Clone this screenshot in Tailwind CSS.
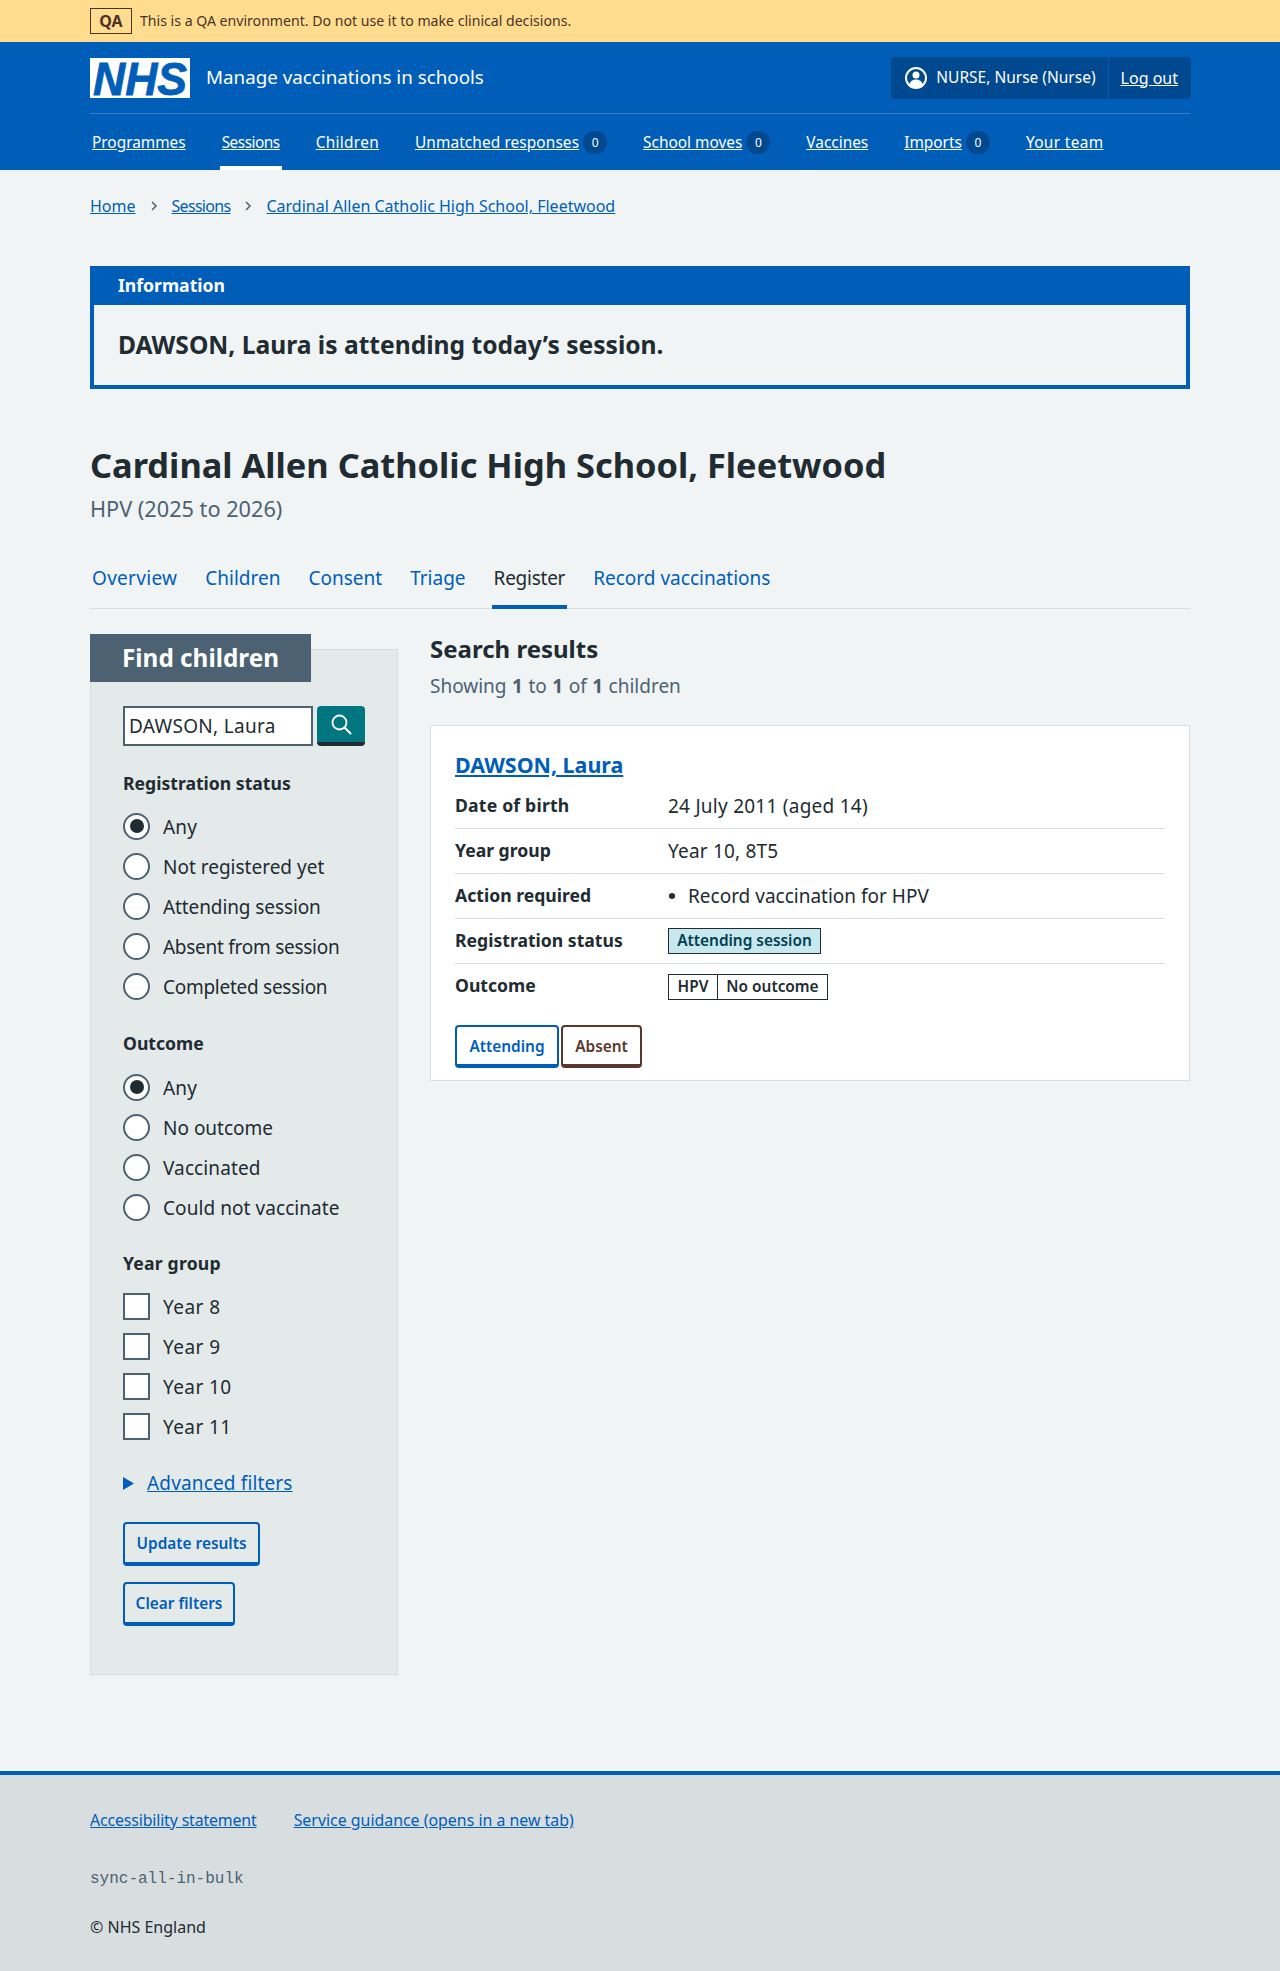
<!DOCTYPE html>
<html lang="en">
<head>
<meta charset="UTF-8">
<title>Register – Manage vaccinations in schools</title>
<script src="https://cdn.jsdelivr.net/npm/@tailwindcss/browser@4"></script>
</head>
<body class="bg-[#f0f4f5] text-[#212b32] font-['Noto_Sans',sans-serif] text-[19px]">

<!-- environment banner -->
<div class="h-[42px] bg-[#ffdc8e] text-[#4a3328]">
  <div class="w-[1100px] mx-auto flex items-center h-[42px]">
    <span class="border border-[#4a3328] w-[42px] h-[26px] flex items-center justify-center font-bold text-[16px] mr-2">QA</span>
    <span class="text-[14.1px]">This is a QA environment. Do not use it to make clinical decisions.</span>
  </div>
</div>

<header class="bg-[#005eb8] h-[128px] text-white">
  <div class="w-[1100px] mx-auto">
    <div class="h-[72px] flex items-center border-b border-white/20">
      <svg class="w-[100px] h-[40px] mr-4 overflow-visible" viewBox="0 0 100 40"><rect width="100" height="40" fill="#fff"/><text x="3" y="37" textLength="94" lengthAdjust="spacingAndGlyphs" font-family="Liberation Sans" font-weight="700" font-style="italic" font-size="47" fill="#005eb8" stroke="#005eb8" stroke-width="0.8">NHS</text></svg>
      <span class="text-[18.8px]">Manage vaccinations in schools</span>
      <div class="ml-auto flex h-[42px] bg-[#00488f] rounded items-center mr-[-1px]">
        <span class="flex items-center gap-[9px] pl-[14px] pr-[12px] text-[15.5px]">
          <svg class="w-[22px] h-[26px]" viewBox="0 0 22 26"><circle cx="11" cy="13" r="10" fill="none" stroke="#fff" stroke-width="2"/><circle cx="11" cy="10" r="3.5" fill="#fff"/><path d="M4 20c1-4 4-5.500 7-5.500s6 1.500 7 5.500a10 10 0 0 1-14 0z" fill="#fff"/></svg>
          NURSE, Nurse (Nurse)
        </span>
        <a class="border-l border-[#005eb8] h-full flex items-center pl-3 pr-[13px] underline text-[16px]">Log out</a>
      </div>
    </div>
    <nav class="flex h-[56px] pt-[2px] items-center text-[15.4px] gap-[36px] pl-[2px]">
      <a class="underline">Programmes</a>
      <a class="underline relative h-full flex items-center tracking-[-0.5px]">Sessions<span class="absolute -left-[2px] -right-[2px] bottom-0 h-1 bg-white"></span></a>
      <a class="underline tracking-[0.3px]">Children</a>
      <span class="flex items-center gap-1"><a class="underline tracking-[0.1px]">Unmatched responses</a><span class="w-6 h-[23px] rounded-full bg-[#00488f] text-[12px] flex items-center justify-center">0</span></span>
      <span class="flex items-center gap-1"><a class="underline">School moves</a><span class="w-6 h-[23px] rounded-full bg-[#00488f] text-[12px] flex items-center justify-center">0</span></span>
      <a class="underline">Vaccines</a>
      <span class="flex items-center gap-1"><a class="underline">Imports</a><span class="w-6 h-[23px] rounded-full bg-[#00488f] text-[12px] flex items-center justify-center">0</span></span>
      <a class="underline tracking-[0.35px]">Your team</a>
    </nav>
  </div>
</header>

<main class="w-[1100px] mx-auto pb-[96px]">
  <div class="h-[72px] text-[16px] text-[#005eb8] flex items-center">
    <a class="underline">Home</a>
    <svg class="w-[36px] h-3" viewBox="0 0 36 12"><path d="M16 2l4 4-4 4" fill="none" stroke="#4c6272" stroke-width="1.500"/></svg>
    <a class="underline tracking-[-0.7px]">Sessions</a>
    <svg class="w-[36px] h-3" viewBox="0 0 36 12"><path d="M16 2l4 4-4 4" fill="none" stroke="#4c6272" stroke-width="1.500"/></svg>
    <a class="underline">Cardinal Allen Catholic High School, Fleetwood</a>
  </div>

  <div class="mt-[24px] border-[4px] border-t-0 border-[#005eb8] h-[123px]">
    <div class="bg-[#005eb8] text-white font-bold text-[17.6px] h-[39px] flex items-center -mx-[4px] pl-[28px]">Information</div>
    <p class="font-bold text-[24.6px] pl-6 h-[80px] flex items-center">DAWSON, Laura is attending today’s session.</p>
  </div>

  <h1 class="mt-[54px] text-[34.4px] font-bold h-[44px] flex items-center">Cardinal Allen Catholic High School, Fleetwood</h1>
  <p class="text-[#4c6272] text-[21.7px] mt-[7px] h-[30px] flex items-center">HPV (2025 to 2026)</p>

  <div class="mt-[24px] flex gap-7 border-b border-[#d8dde0] h-[61px] pl-[2px] text-[#005eb8]">
    <a class="flex items-center h-[60px] tracking-[0.3px]">Overview</a>
    <a class="flex items-center h-[60px]">Children</a>
    <a class="flex items-center h-[60px]">Consent</a>
    <a class="flex items-center h-[60px]">Triage</a>
    <a class="flex items-center h-[61px] text-[#212b32] relative tracking-[-0.25px]">Register<span class="absolute -left-[2px] -right-[2px] bottom-0 h-1 bg-[#005eb8]"></span></a>
    <a class="flex items-center h-[60px]">Record vaccinations</a>
  </div>

  <div class="flex gap-8 mt-[25px] items-start">
    <aside class="w-[308px] h-[1026px] mt-[15px] bg-[#e4eaea] border border-[#d8dde0]">
      <div class="-mt-[16px] -ml-px w-[221px] h-[48px] bg-[#4c6272] text-white font-bold text-[24.3px] flex items-center pl-[32px]">Find children</div>
      <div class="pl-8">
        <div class="flex gap-1 mt-[24px]">
          <div class="w-[190px] h-[40px] border-2 border-[#4c6272] bg-white pl-1 flex items-center tracking-[0.3px]">DAWSON, Laura</div>
          <div class="w-[48px] h-[40px] bg-[#007780] rounded border-b-4 border-[#212b32] flex items-center justify-center">
            <svg class="w-[22px] h-[22px]" viewBox="0 0 22 22"><circle cx="9.500" cy="9.500" r="7" fill="none" stroke="#fff" stroke-width="1.800"/><path d="M14.500 14.500l6 6" stroke="#fff" stroke-width="2" stroke-linecap="round"/></svg>
          </div>
        </div>

        <div class="mt-[23px] h-[28px] flex items-center font-bold text-[17.6px]">Registration status</div>
        <div class="mt-[9px]">
          <label class="h-[40px] flex items-center gap-[13px]"><span class="w-[27px] h-[27px] rounded-full border-2 border-[#4c6272] bg-white flex items-center justify-center"><span class="w-[14px] h-[14px] rounded-full bg-[#212b32]"></span></span><span class="mt-[2px] tracking-[0.2px]">Any</span></label>
          <label class="h-[40px] flex items-center gap-[13px]"><span class="w-[27px] h-[27px] rounded-full border-2 border-[#4c6272] bg-white"></span><span class="mt-[2px]">Not registered yet</span></label>
          <label class="h-[40px] flex items-center gap-[13px]"><span class="w-[27px] h-[27px] rounded-full border-2 border-[#4c6272] bg-white"></span><span class="mt-[2px] tracking-[-0.1px]">Attending session</span></label>
          <label class="h-[40px] flex items-center gap-[13px]"><span class="w-[27px] h-[27px] rounded-full border-2 border-[#4c6272] bg-white"></span><span class="mt-[2px] tracking-[-0.27px]">Absent from session</span></label>
          <label class="h-[40px] flex items-center gap-[13px]"><span class="w-[27px] h-[27px] rounded-full border-2 border-[#4c6272] bg-white"></span><span class="mt-[2px] tracking-[-0.27px]">Completed session</span></label>
        </div>

        <div class="mt-[23px] h-[28px] flex items-center font-bold text-[17.6px]">Outcome</div>
        <div class="mt-[10px]">
          <label class="h-[40px] flex items-center gap-[13px]"><span class="w-[27px] h-[27px] rounded-full border-2 border-[#4c6272] bg-white flex items-center justify-center"><span class="w-[14px] h-[14px] rounded-full bg-[#212b32]"></span></span><span class="mt-[2px] tracking-[0.2px]">Any</span></label>
          <label class="h-[40px] flex items-center gap-[13px]"><span class="w-[27px] h-[27px] rounded-full border-2 border-[#4c6272] bg-white"></span><span class="mt-[2px]">No outcome</span></label>
          <label class="h-[40px] flex items-center gap-[13px]"><span class="w-[27px] h-[27px] rounded-full border-2 border-[#4c6272] bg-white"></span><span class="mt-[2px] tracking-[0.1px]">Vaccinated</span></label>
          <label class="h-[40px] flex items-center gap-[13px]"><span class="w-[27px] h-[27px] rounded-full border-2 border-[#4c6272] bg-white"></span><span class="mt-[2px] tracking-[0.07px]">Could not vaccinate</span></label>
        </div>

        <div class="mt-[22px] h-[28px] flex items-center font-bold text-[17.6px] tracking-[0.2px]">Year group</div>
        <div class="mt-[9px]">
          <label class="h-[40px] flex items-center gap-[13px]"><span class="w-[27px] h-[27px] border-2 border-[#4c6272] bg-white"></span><span class="mt-[2px] tracking-[0.45px]">Year 8</span></label>
          <label class="h-[40px] flex items-center gap-[13px]"><span class="w-[27px] h-[27px] border-2 border-[#4c6272] bg-white"></span><span class="mt-[2px] tracking-[0.45px]">Year 9</span></label>
          <label class="h-[40px] flex items-center gap-[13px]"><span class="w-[27px] h-[27px] border-2 border-[#4c6272] bg-white"></span><span class="mt-[2px] tracking-[0.4px]">Year 10</span></label>
          <label class="h-[40px] flex items-center gap-[13px]"><span class="w-[27px] h-[27px] border-2 border-[#4c6272] bg-white"></span><span class="mt-[2px] tracking-[0.4px]">Year 11</span></label>
        </div>

        <div class="mt-[23px] h-[28px] flex items-center gap-[13px] text-[#005eb8]">
          <svg class="w-[11px] h-[13px]" viewBox="0 0 11 13"><path d="M0 0l11 6.500-11 6.500z" fill="#005eb8"/></svg>
          <a class="underline tracking-[0.15px]">Advanced filters</a>
        </div>

        <a class="mt-[25px] w-[137px] h-[44px] pt-[2px] flex items-center justify-center border-2 border-b-4 border-[#005eb8] rounded text-[#005eb8] font-semibold text-[15.4px]">Update results</a>
        <a class="mt-[16px] w-[112px] h-[44px] pt-[2px] flex items-center justify-center border-2 border-b-4 border-[#005eb8] rounded text-[#005eb8] font-semibold text-[15.4px]">Clear filters</a>
      </div>
    </aside>

    <section class="flex-1">
      <h2 class="font-bold text-[24px] h-[30px] flex items-center">Search results</h2>
      <p class="text-[#4c6272] mt-[7px] h-[30px] flex items-center gap-[5.5px]"><span>Showing</span><b>1</b><span>to</span><b>1</b><span>of</span><b>1</b><span>children</span></p>

      <div class="mt-[24px] h-[356px] bg-white border border-[#d8dde0] px-6 pt-[23px]">
        <a class="h-[32px] flex items-center font-bold text-[#005eb8] text-[21.4px] underline">DAWSON, Laura</a>
        <div class="mt-[3px] h-[45px] border-b border-[#d8dde0] flex items-center"><span class="w-[213px] -mt-[2px] font-bold text-[17.6px] tracking-[0.2px]">Date of birth</span><span class="tracking-[0.25px]">24 July 2011 (aged 14)</span></div>
        <div class="h-[45px] border-b border-[#d8dde0] flex items-center"><span class="w-[213px] -mt-[2px] font-bold text-[17.6px]">Year group</span><span class="tracking-[0.2px]">Year 10, 8T5</span></div>
        <div class="h-[45px] border-b border-[#d8dde0] flex items-center"><span class="w-[213px] -mt-[2px] font-bold text-[17.6px]">Action required</span><span class="w-[6px] h-[6px] rounded-full bg-[#212b32] ml-[1px] mr-[13px]"></span><span>Record vaccination for HPV</span></div>
        <div class="h-[45px] border-b border-[#d8dde0] flex items-center"><span class="w-[213px] -mt-[2px] font-bold text-[17.6px]">Registration status</span><span class="w-[153px] h-[26px] border border-[#212b32] bg-[#c7e8ee] text-[#00404f] font-semibold text-[15.4px] flex items-center justify-center">Attending session</span></div>
        <div class="h-[45px] flex items-center"><span class="w-[213px] -mt-[2px] font-bold text-[17.6px]">Outcome</span><span class="h-[26px] border border-[#212b32] flex font-semibold text-[15.4px]"><span class="w-[49px] border-r border-[#212b32] flex items-center justify-center">HPV</span><span class="w-[109px] flex items-center justify-center">No outcome</span></span></div>
        <div class="mt-[16px] flex gap-[2px]">
          <a class="w-[104px] h-[43px] pt-[2px] flex items-center justify-center border-2 border-b-4 border-[#005eb8] rounded text-[#005eb8] font-semibold text-[15.4px]">Attending</a>
          <a class="w-[81px] h-[43px] pt-[2px] flex items-center justify-center border-2 border-b-4 border-[#5a372c] rounded text-[#5a372c] font-semibold text-[15.4px]">Absent</a>
        </div>
      </div>
    </section>
  </div>
</main>

<footer class="bg-[#d8dde0] border-t-4 border-[#005eb8] h-[200px]">
  <div class="w-[1100px] mx-auto pt-[34px] text-[16px]">
    <div class="h-[24px] flex items-center gap-[37px] text-[#005eb8] text-[15.9px]"><a class="underline tracking-[-0.15px]">Accessibility statement</a><a class="underline">Service guidance (opens in a new tab)</a></div>
    <div class="mt-[34px] h-[24px] flex items-center font-['Liberation_Mono',monospace] text-[#4c6272]">sync-all-in-bulk</div>
    <div class="mt-[24px] h-[24px] flex items-center">© NHS England</div>
  </div>
</footer>
</body>
</html>
